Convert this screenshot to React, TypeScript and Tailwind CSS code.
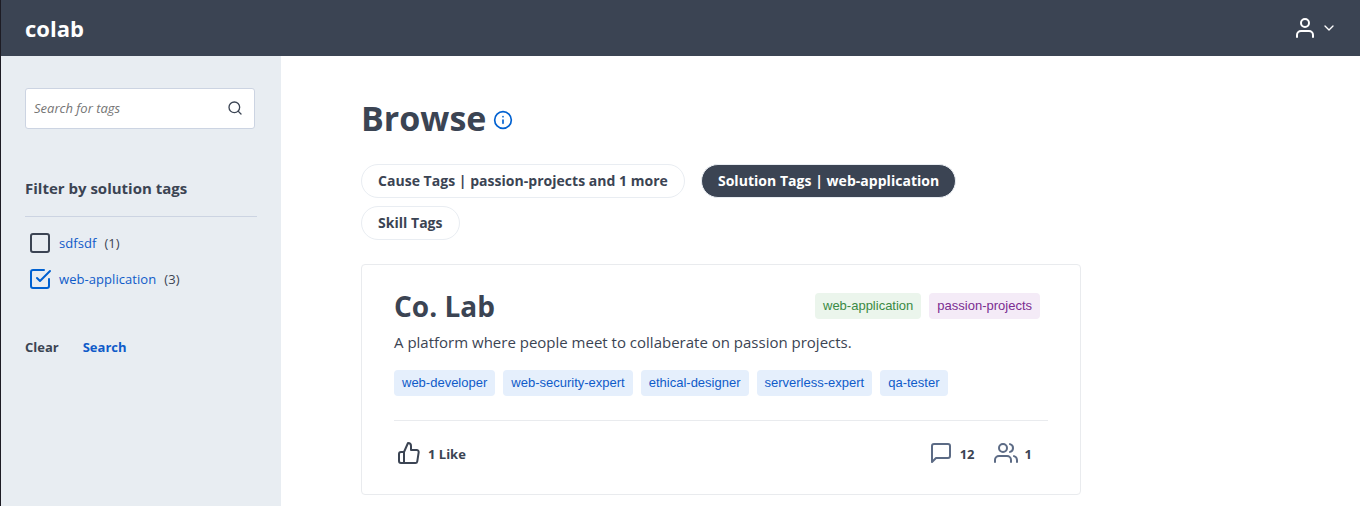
import type { ReactNode } from 'react';
import {
  FiCheckSquare,
  FiChevronDown,
  FiInfo,
  FiMessageSquare,
  FiSearch,
  FiSquare,
  FiThumbsUp,
  FiUser,
  FiUsers,
} from 'react-icons/fi';

function Pill({ children, active = false }: { children: ReactNode; active?: boolean }) {
  return (
    <button
      className={
        active
          ? 'flex h-[34px] items-center rounded-full border border-[#e9edf2] bg-[#3b4453] px-4 text-sm font-bold tracking-[0.035px] whitespace-nowrap text-white'
          : 'flex h-[34px] items-center rounded-full border border-[#e9edf2] bg-white px-4 text-sm font-bold tracking-[0.025px] whitespace-nowrap'
      }
    >
      {children}
    </button>
  );
}

const tones = {
  blue: 'bg-[#e5effc] text-[#0f5bc9]',
  green: 'bg-[#ebf5ec] text-[#3a8a44]',
  purple: 'bg-[#f4ebf7] text-[#7b2d91]',
};

function Tag({ children, tone }: { children: ReactNode; tone: keyof typeof tones }) {
  return (
    <span
      className={`flex h-[26px] items-center rounded-[4px] px-2 font-['Liberation_Sans',sans-serif] text-[13px] whitespace-nowrap ${tones[tone]}`}
    >
      {children}
    </span>
  );
}

const skills = ['web-developer', 'web-security-expert', 'ethical-designer', 'serverless-expert', 'qa-tester'];

export default function App() {
  return (
    <div className="flex h-[506px] w-full flex-col overflow-hidden border-l border-[#1d1c24] bg-white font-['Open_Sans',sans-serif] text-[#3b4453]">
      <header className="flex h-14 shrink-0 items-center justify-between bg-[#3b4453] pr-[23px] pl-6 text-white">
        <span className="text-[22px] leading-[30px] font-bold">colab</span>
        <div className="flex items-center gap-1">
          <FiUser size={24} />
          <FiChevronDown size={16} />
        </div>
      </header>

      <div className="flex min-h-0 flex-1">
        <aside className="w-[280px] shrink-0 bg-[#e8edf2] px-6 pt-8">
          <div className="flex h-[41px] w-[230px] items-center justify-between rounded-[3px] border border-[#ccd4e2] bg-white pr-[11px] pl-2">
            <input
              className="w-40 text-[13px] italic outline-none placeholder:text-[#757575]"
              placeholder="Search for tags"
            />
            <FiSearch size={16} className="mb-px" />
          </div>
          <h2 className="mt-[47px] text-[15px] leading-6 font-bold">Filter by solution tags</h2>
          <div className="mt-4 h-px w-[232px] bg-[#ccd4e2]" />
          <div className="mt-[14px] flex flex-col gap-3 pl-[3px] text-[13px] tracking-[0.06px] text-[#0f5bc9]">
            <label className="flex h-6 items-center">
              <FiSquare size={24} className="text-[#3b4453]" />
              <span className="ml-[7px] pt-[2px]">sdfsdf</span>
              <span className="ml-2 pt-[2px] text-[#3b4453]">(1)</span>
            </label>
            <label className="flex h-6 items-center">
              <FiCheckSquare size={24} className="text-[#0061d1]" />
              <span className="ml-[7px] pt-[2px]">web-application</span>
              <span className="ml-2 pt-[2px] text-[#3b4453]">(3)</span>
            </label>
          </div>
          <div className="mt-[46px] flex gap-6 text-[13px] leading-5 font-bold">
            <button>Clear</button>
            <button className="text-[#0f5bc9]">Search</button>
          </div>
        </aside>

        <main className="pt-[37px] pl-20">
          <div className="flex items-center gap-[6.5px]">
            <h1 className="text-[34px] leading-[50px] font-bold">Browse</h1>
            <FiInfo size={20} className="mt-1 text-[#0061d1]" />
          </div>

          <div className="mt-[21px] flex w-[700px] flex-wrap gap-x-4 gap-y-2">
            <Pill>Cause Tags | passion-projects and 1 more</Pill>
            <Pill active>Solution Tags | web-application</Pill>
            <Pill>Skill Tags</Pill>
          </div>

          <article className="mt-6 h-[231px] w-[720px] rounded-[4px] border border-[#e9ebee] px-8 pt-[22px]">
            <div className="flex h-[38px] items-center justify-between">
              <h2 className="text-[28px] leading-[38px] font-bold">Co. Lab</h2>
              <div className="mr-2 -mt-px flex gap-2">
                <Tag tone="green">web-application</Tag>
                <Tag tone="purple">passion-projects</Tag>
              </div>
            </div>
            <p className="mt-[5px] text-[15px] leading-6">
              A platform where people meet to collaberate on passion projects.
            </p>
            <div className="mt-4 flex gap-2">
              {skills.map((skill) => (
                <Tag key={skill} tone="blue">
                  {skill}
                </Tag>
              ))}
            </div>
            <div className="mt-6 flex items-center justify-between border-t border-[#e9ebee] pt-5 pr-4 pl-[3px] text-[13px] leading-5 font-bold">
              <div className="flex items-center gap-[7px]">
                <FiThumbsUp size={24} />
                <span className="pt-px">1 Like</span>
              </div>
              <div className="flex items-center">
                <FiMessageSquare size={24} className="text-[#5c6b85]" />
                <span className="ml-[7px] pt-px">12</span>
                <FiUsers size={24} className="ml-[19px] text-[#5c6b85]" />
                <span className="ml-[7px] pt-px">1</span>
              </div>
            </div>
          </article>
        </main>
      </div>
    </div>
  );
}
